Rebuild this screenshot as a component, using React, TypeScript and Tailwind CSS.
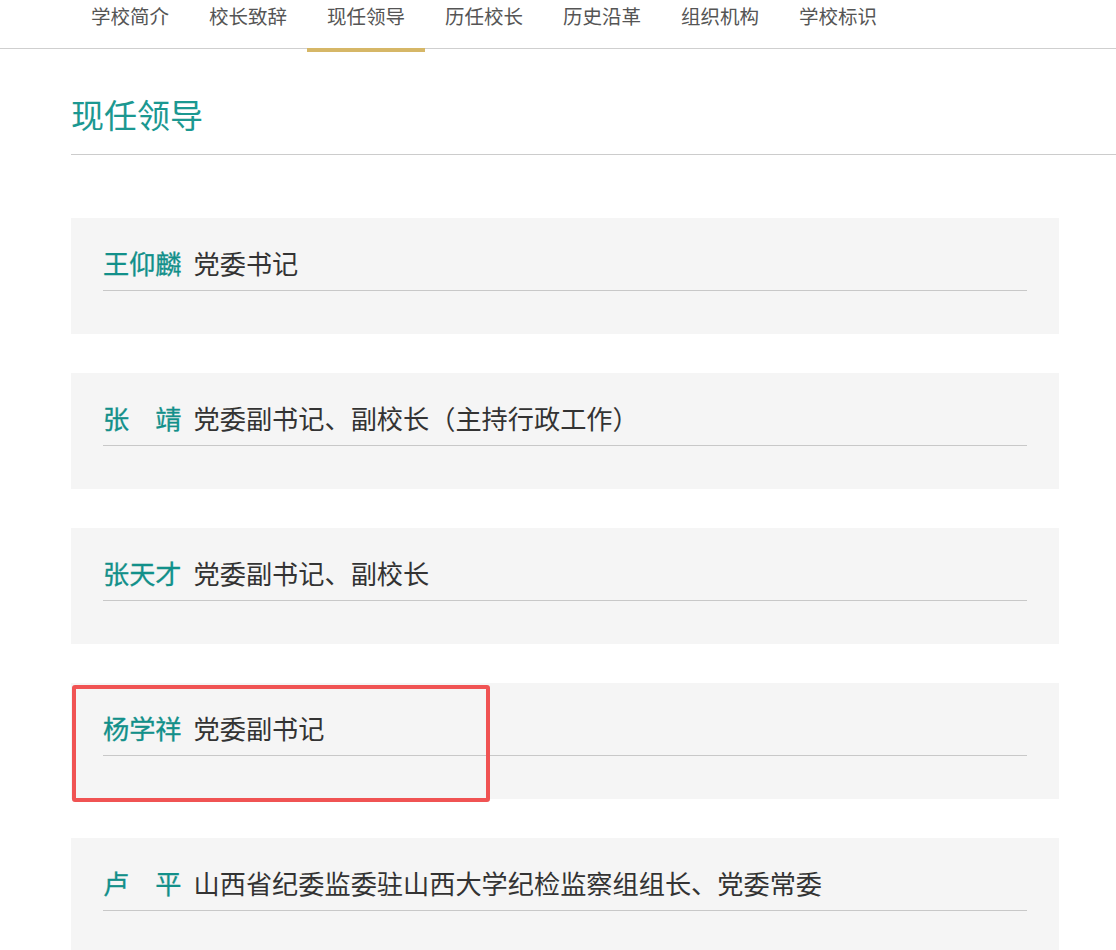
import React from 'react';

const tabs = ['学校简介', '校长致辞', '现任领导', '历任校长', '历史沿革', '组织机构', '学校标识'];

const leaders = [
  { name: '王仰麟', title: '党委书记' },
  { name: '张　靖', title: '党委副书记、副校长（主持行政工作）' },
  { name: '张天才', title: '党委副书记、副校长' },
  { name: '杨学祥', title: '党委副书记', marked: true },
  { name: '卢　平', title: '山西省纪委监委驻山西大学纪检监察组组长、党委常委' },
];

const font = { fontFamily: '"Noto Sans CJK SC", "Noto Sans", sans-serif' };

export default function App() {
  return (
    <div className="w-[1116px] h-[950px] overflow-hidden bg-white" style={font}>
      {/* tab bar */}
      <div className="h-[49px] border-b border-[#cfcfcf] pl-[71px] flex">
        {tabs.map((t) => (
          <div key={t} className="relative w-[118px] h-[48px] flex justify-center text-[19.5px] text-[#555]">
            <span className="leading-[32px]">{t}</span>
            {t === '现任领导' && <div className="absolute left-0 right-0 top-[48px] h-[4px] bg-[#d6b767]" />}
          </div>
        ))}
      </div>

      {/* heading */}
      <div className="ml-[71px] mt-[42px] border-b border-[#cccccc] pb-[17px]">
        <h2 className="text-[33px] leading-[46px] text-[#1b9891]">现任领导</h2>
      </div>

      {/* leader cards */}
      <div className="ml-[71px] w-[988px] mt-[63px] flex flex-col gap-[39px]">
        {leaders.map((l) => (
          <div key={l.name} className="relative bg-[#f5f5f5] h-[116px] px-[32px] pt-[30px]">
            <div className="flex items-center border-b border-[#c8c8c8] h-[43px] pb-[11px] text-[26.2px]">
              <span className="text-[#12908a] mr-[12px] [-webkit-text-stroke:0.3px_#12908a]">{l.name}</span>
              <span className="text-[#333]">{l.title}</span>
            </div>
            {l.marked && (
              <div className="absolute left-[1px] top-[2px] w-[418px] h-[117px] border-[4px] border-[#f05353] rounded-[3px]" />
            )}
          </div>
        ))}
      </div>
    </div>
  );
}
